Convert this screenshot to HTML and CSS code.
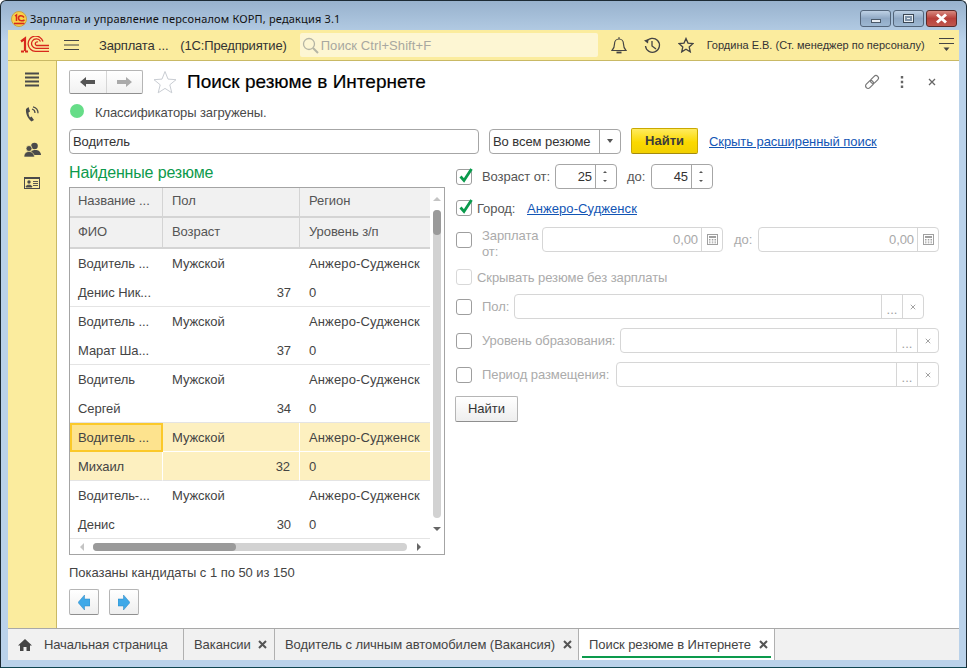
FILE: index.html
```html
<!DOCTYPE html>
<html lang="ru">
<head>
<meta charset="utf-8">
<title>Поиск резюме в Интернете</title>
<link rel="stylesheet" href="styles.css">
</head>
<body>
<svg class="defs" width="0" height="0" aria-hidden="true"><defs>
<symbol id="calc" viewBox="0 0 11 11"><rect x=".5" y=".5" width="10" height="10" fill="none" stroke="currentColor"/><rect x="2" y="2" width="7" height="2" fill="currentColor"/><path d="M2 5.500h1.500M4.800 5.500h1.500M7.500 5.500h1.500M2 7h1.500M4.800 7h1.500M7.500 7h1.500M2 8.800h1.500M4.800 8.800h1.500M7.500 8.800h1.500" stroke="currentColor" fill="none"/></symbol>
<symbol id="cross" viewBox="0 0 8 8"><path d="M1 1l6 6M7 1L1 7" stroke="currentColor" stroke-width="1.300" fill="none"/></symbol>
<symbol id="crossb" viewBox="0 0 9 9"><path d="M1 1l7 7M8 1L1 8" stroke="currentColor" stroke-width="2" fill="none"/></symbol>
<symbol id="tick" viewBox="0 0 16 16"><path d="M3.500 8.500l3.500 4 7.500-11.500" stroke="#0a9a4c" stroke-width="2.800" fill="none"/></symbol>
</defs></svg>
<div class="window">
  <header class="titlebar">
    <svg class="app-logo" width="16" height="16" viewBox="0 0 16 16"><circle cx="8" cy="8" r="7.500" fill="#f8d24a" stroke="#c9a040"/><path d="M3 12.500h10.500" stroke="#d8281c" stroke-width="1.600"/><path d="M4 5l1.500-1v6M13 6.500C11.500 4 7.500 4 7.500 7s4 3.300 6 2" stroke="#d8281c" stroke-width="1.500" fill="none"/></svg>
    <span class="app-title">Зарплата и управление персоналом КОРП, редакция 3.1</span>
    <div class="win-btns">
      <span class="win-btn"><i class="g-min"></i></span>
      <span class="win-btn"><i class="g-max"></i></span>
      <span class="win-btn win-close"><svg width="13" height="11" viewBox="0 0 13 11"><path d="M2 1.500l9 8M11 1.500l-9 8" stroke="#fff" stroke-width="3" fill="none"/></svg></span>
    </div>
  </header>

  <div class="toolbar">
    <svg class="logo-1c" width="30" height="18" viewBox="0 0 30 18"><path d="M1 5.500L5 2.500V15M4 15.500H1M5 15.500H8" fill="none" stroke="#d8281c" stroke-width="2.200"/><path d="M29 12.300H16A4.700 4.700 0 1 1 20.500 5.500M29 15.300H15.500A7.600 7.600 0 1 1 23 5.500M29 9.500H16.500A1.900 1.900 0 1 1 18 6" fill="none" stroke="#d8281c" stroke-width="1.300"/></svg>
    <svg class="burger" width="16" height="12" viewBox="0 0 16 12"><path d="M0 1.500h15M0 6h15M0 10.500h15" stroke="#444" stroke-width="1"/></svg>
    <span class="tb-app">Зарплата ...</span>
    <span class="tb-prod">(1С:Предприятие)</span>
    <div class="global-search">
      <svg width="17" height="17" viewBox="0 0 17 17"><circle cx="7" cy="7" r="5.500" fill="none" stroke="#b5b5a5" stroke-width="1.300"/><path d="M11 11l5 5" stroke="#b5b5a5" stroke-width="2"/></svg>
      <span>Поиск Ctrl+Shift+F</span>
    </div>
    <svg class="tb-ic bell" width="16" height="17" viewBox="0 0 16 17"><path d="M1 13.500c2-2 2.500-3.500 2.500-6.500C3.500 4 5.500 2 8 2s4.500 2 4.500 5c0 3 .5 4.500 2.500 6.500z" fill="none" stroke="#444" stroke-width="1.200"/><path d="M5.500 15.500h5" stroke="#444" stroke-width="1.800"/><path d="M8 0v2" stroke="#444"/></svg>
    <svg class="tb-ic hist" width="17" height="17" viewBox="0 0 17 17"><path d="M2.300 5A7 7 0 1 1 1.500 9" fill="none" stroke="#444" stroke-width="1.300"/><path d="M0 3.500l4 3 .5-4.500z" fill="#444"/><path d="M8 4v5l4 3" fill="none" stroke="#444" stroke-width="1.300"/></svg>
    <svg class="tb-ic star" width="16" height="16" viewBox="0 0 16 16"><path d="M8 1.500l2 4.600 5 .5-3.800 3.300 1.100 5L8 12.300 3.700 14.900l1.100-5L1 6.600l5-.5z" fill="none" stroke="#444" stroke-width="1.300"/></svg>
    <span class="tb-user">Гордина Е.В. (Ст. менеджер по персоналу)</span>
    <svg class="tb-menu" width="15" height="15" viewBox="0 0 15 15"><path d="M0 .5h15M0 5.500h15" stroke="#444"/><path d="M4.500 9.500h6L7.500 13z" fill="#444"/></svg>
  </div>

  <div class="main">
    <nav class="sidebar">
      <svg width="14" height="15" viewBox="0 0 14 15"><path d="M0 1.500h14M0 5.500h14M0 9.500h14M0 13.500h14" stroke="#4a4a4a" stroke-width="2"/></svg>
      <svg width="14" height="17" viewBox="0 0 14 17"><path d="M3.500 1L1 3c-.5 4 1.500 9.500 5.500 12.500l2.500-1.500-2.500-3.500-1.500 1C4 10 3.500 8 3.500 6.500L5 5.500z" fill="#4a4a4a"/><path d="M7 3a4 4 0 0 1 3 4M8 .8a6.500 6.500 0 0 1 5 6.500" stroke="#4a4a4a" fill="none" stroke-width="1.200"/></svg>
      <svg width="17" height="16" viewBox="0 0 17 16"><circle cx="10.500" cy="4" r="3.300" fill="#4a4a4a"/><path d="M7 9.500C8 8 13 7.500 15 9c1.500 1 2 3 2 4h-7z" fill="#4a4a4a"/><circle cx="5" cy="6.500" r="3" fill="#4a4a4a" stroke="#fbec9e" stroke-width=".8"/><path d="M0 15c0-4 2.500-5.500 5-5.500s5 1.500 5.500 5.500z" fill="#4a4a4a" stroke="#fbec9e" stroke-width=".6"/></svg>
      <svg width="16" height="12" viewBox="0 0 16 12"><rect x=".5" y=".5" width="15" height="11" fill="none" stroke="#4a4a4a"/><rect y="0" width="16" height="2" fill="#4a4a4a"/><circle cx="5" cy="5" r="1.700" fill="#4a4a4a"/><path d="M2 10c0-2.500 6-2.500 6 0zM9 4.500h5M9 6.500h5M9 8.500h5" fill="#4a4a4a" stroke="#4a4a4a" stroke-width=".9"/></svg>
    </nav>

    <main class="content">
      <div class="form-head">
        <div class="nav-group">
          <span class="nav-cell"><svg width="16" height="10" viewBox="0 0 16 10"><path d="M0 5l6-5v3h9v4H6v3z" fill="#555"/></svg></span>
          <span class="nav-cell"><svg width="16" height="10" viewBox="0 0 16 10"><path d="M16 5l-6-5v3H1v4h9v3z" fill="#aaa"/></svg></span>
        </div>
        <svg class="fav" width="24" height="24" viewBox="0 0 24 24"><path d="M12 1.500l3 7.600 8 .6-6.200 5.100 2 8L12 18.400 5.200 22.800l2-8L1 9.700l8-.6z" fill="#fff" stroke="#c9cdd3" stroke-width="1"/></svg>
        <h1>Поиск резюме в Интернете</h1>
        <div class="head-tools">
          <svg width="16" height="16" viewBox="0 0 16 16"><g fill="none" stroke="#777" stroke-width="1.200"><rect x="6" y="3" width="9" height="5" rx="2.500" transform="rotate(-45 10.500 5.500)"/><rect x="1" y="8" width="9" height="5" rx="2.500" transform="rotate(-45 5.500 10.500)"/></g></svg>
          <svg width="4" height="12" viewBox="0 0 4 12"><path d="M2 0v2.500M2 4.700v2.500M2 9.500V12" stroke="#666" stroke-width="2.400"/></svg>
          <svg width="8" height="8"><use href="#cross" color="#666"/></svg>
        </div>
      </div>

      <div class="status"><i class="dot"></i><span>Классификаторы загружены.</span></div>

      <div class="searchbar">
        <div class="field search-input"><span class="val">Водитель</span></div>
        <div class="field scope"><span class="val">Во всем резюме</span><span class="cell-btn w21"><i class="caret"></i></span></div>
        <button class="btn-primary" type="button">Найти</button>
        <a class="link adv" href="#">Скрыть расширенный поиск</a>
      </div>

      <div class="columns">
        <section class="left">
          <h2>Найденные резюме</h2>
          <div class="table">
            <div class="grid">
              <div class="hc">Название ...</div><div class="hc">Пол</div><div class="hc">Регион</div>
              <div class="hc hc2">ФИО</div><div class="hc hc2">Возраст</div><div class="hc hc2">Уровень з/п</div>

              <div class="c">Водитель ...</div><div class="c">Мужской</div><div class="c">Анжеро-Судженск</div>
              <div class="c end">Денис Ник...</div><div class="c end num">37</div><div class="c end">0</div>

              <div class="c">Водитель ...</div><div class="c">Мужской</div><div class="c">Анжеро-Судженск</div>
              <div class="c end">Марат Ша...</div><div class="c end num">37</div><div class="c end">0</div>

              <div class="c">Водитель</div><div class="c">Мужской</div><div class="c">Анжеро-Судженск</div>
              <div class="c end">Сергей</div><div class="c end num">34</div><div class="c end">0</div>

              <div class="c sel cur">Водитель ...</div><div class="c sel">Мужской</div><div class="c sel">Анжеро-Судженск</div>
              <div class="c sel end">Михаил</div><div class="c sel end num">32</div><div class="c sel end">0</div>

              <div class="c">Водитель-...</div><div class="c">Мужской</div><div class="c">Анжеро-Судженск</div>
              <div class="c end">Денис</div><div class="c end num">30</div><div class="c end">0</div>
            </div>
            <div class="vscroll"><i class="arr-up"></i><div class="vtrack"><i class="vthumb"></i></div><i class="arr-down"></i></div>
            <div class="hscroll"><i class="arr-left"></i><div class="htrack"><i class="hthumb"></i></div><i class="arr-right"></i></div>
          </div>
          <p class="shown">Показаны кандидаты с 1 по 50 из 150</p>
          <div class="pager">
            <span class="btn-sq"><svg width="12" height="15" viewBox="0 0 12 15"><path d="M0 7.500L6.500 0v4H12v7H6.500v4z" fill="#3fa9e8" stroke="#2a85c0" stroke-width=".5"/></svg></span>
            <span class="btn-sq"><svg width="12" height="15" viewBox="0 0 12 15"><path d="M12 7.500L5.500 0v4H0v7h5.500v4z" fill="#3fa9e8" stroke="#2a85c0" stroke-width=".5"/></svg></span>
          </div>
        </section>

        <section class="right">
          <div class="row r-age">
            <span class="chk"><svg width="16" height="16"><use href="#tick"/></svg></span>
            <label class="lab l1">Возраст от:</label>
            <div class="field spin"><span class="val ar">25</span><span class="spinner"><i class="up"></i><i class="down"></i></span></div>
            <label class="lab l-to">до:</label>
            <div class="field spin"><span class="val ar">45</span><span class="spinner"><i class="up"></i><i class="down"></i></span></div>
          </div>
          <div class="row r-city">
            <span class="chk"><svg width="16" height="16"><use href="#tick"/></svg></span>
            <label class="lab l2 l-city">Город:</label>
            <a class="link" href="#">Анжеро-Судженск</a>
          </div>
          <div class="row r-sal dis">
            <span class="chk"></span>
            <label class="lab l-sal">Зарплата от:</label>
            <div class="field grow"><span class="val ar">0,00</span><span class="cell-btn w21"><svg width="11" height="11"><use href="#calc"/></svg></span></div>
            <label class="lab l-to2">до:</label>
            <div class="field grow"><span class="val ar">0,00</span><span class="cell-btn w21"><svg width="11" height="11"><use href="#calc"/></svg></span></div>
          </div>
          <div class="row r-hide dis">
            <span class="chk faint"></span>
            <label class="lab l2">Скрывать резюме без зарплаты</label>
          </div>
          <div class="row r-sex dis">
            <span class="chk"></span>
            <label class="lab l3">Пол:</label>
            <div class="field grow"><span class="val"></span><span class="cell-btn w21 dots">...</span><span class="cell-btn w21"><svg width="6" height="6" viewBox="0 0 8 8"><use href="#cross"/></svg></span></div>
          </div>
          <div class="row r-opt dis">
            <span class="chk"></span>
            <label class="lab l3 l-edu">Уровень образования:</label>
            <div class="field grow"><span class="val"></span><span class="cell-btn w21 dots">...</span><span class="cell-btn w21"><svg width="6" height="6" viewBox="0 0 8 8"><use href="#cross"/></svg></span></div>
          </div>
          <div class="row r-opt dis">
            <span class="chk"></span>
            <label class="lab l3 l-per">Период размещения:</label>
            <div class="field grow"><span class="val"></span><span class="cell-btn w21 dots">...</span><span class="cell-btn w21"><svg width="6" height="6" viewBox="0 0 8 8"><use href="#cross"/></svg></span></div>
          </div>
          <button class="btn" type="button">Найти</button>
        </section>
      </div>
    </main>
  </div>

  <footer class="tabs">
    <div class="tab t-home"><svg width="14" height="12" viewBox="0 0 14 12"><path d="M7 0L0 6.500h2V12h3.500V8h3v4H12V6.500h2z" fill="#444"/></svg><span>Начальная страница</span></div>
    <div class="tab t-vac"><span>Вакансии</span><svg width="9" height="9"><use href="#crossb" color="#555"/></svg></div>
    <div class="tab t-drv"><span>Водитель с личным автомобилем (Вакансия)</span><svg width="9" height="9"><use href="#crossb" color="#555"/></svg></div>
    <div class="tab active"><span>Поиск резюме в Интернете</span><svg width="9" height="9"><use href="#crossb" color="#555"/></svg></div>
  </footer>
</div>
</body>
</html>
```

FILE: styles.css
```css
* { box-sizing: border-box; }
html, body { margin: 0; padding: 0; }
body { width: 967px; height: 668px; overflow: hidden; background: #fff; font: 13px/15px "Liberation Sans", Arial, sans-serif; letter-spacing: -.07px; color: #4a4a4a; }
.defs { position: absolute; }
i { display: block; }
svg { display: block; flex: none; }

.window { width: 967px; height: 668px; display: flex; flex-direction: column; padding: 0 7px 7px 7px; background: linear-gradient(#98b2cd 0, #bad2ea 40px, #bad2ea 100%); border: 1px solid #1c2a33; border-bottom-color: #0f4550; border-radius: 6px 6px 0 0; }

.titlebar { height: 29px; margin: 0 -1px; padding-top: 7px; display: flex; align-items: center; flex: none; }
.app-logo { margin-left: 4px; }
.app-title { margin-left: 3px; font: 11px/14px "Noto Sans", sans-serif; letter-spacing: .17px; color: #111; }
.win-btns { margin-left: auto; margin-right: 3px; align-self: flex-start; margin-top: 2px; display: flex; gap: 2px; }
.win-btn { width: 31px; height: 17px; border: 1px solid #53657a; border-radius: 3px; background: linear-gradient(#bed1e5, #90a9c5 50%, #9db8d2); display: flex; align-items: center; justify-content: center; }
.win-close { border-color: #5a2a28; background: linear-gradient(#d88a80, #b8403a 50%, #c0574d); }
.g-min { width: 10px; height: 4px; margin-top: 4px; background: #e8eef4; border: 1px solid #4a5a6a; }
.g-max { width: 11px; height: 9px; border: 1px solid #3a4654; background: #e8eef4; box-shadow: inset 0 0 0 1px #e8eef4, inset 0 0 0 3px #7e92a8; }

.toolbar { height: 31px; flex: none; display: flex; align-items: center; background: #fbec9e; border-bottom: 1px solid #c9b965; color: #333; }
.logo-1c { margin-left: 12px; }
.burger { margin-left: 14px; }
.tb-app { margin-left: 19px; letter-spacing: -.17px; }
.tb-prod { margin-left: 12px; letter-spacing: -.17px; }
.global-search { width: 298px; height: 24px; margin-left: 13px; background: #fdf6d3; border-radius: 2px; display: flex; align-items: center; gap: 2px; padding-left: 2px; color: #a8a8a0; letter-spacing: .09px; }
.bell { margin-left: 13px; }
.hist { margin-left: 17px; }
.star { margin-left: 17px; }
.tb-user { margin-left: 13px; font-size: 11px; letter-spacing: 0; }
.tb-menu { margin-left: 14px; }

.main { flex: 1; min-height: 0; display: flex; }
.sidebar { width: 49px; flex: none; background: #fbec9e; border-right: 1px solid #c9b965; display: flex; flex-direction: column; align-items: center; padding-top: 11px; gap: 19px; }
.content { flex: 1; min-width: 0; background: #fff; padding: 8px 19px 0 12px; }

.form-head { height: 25px; display: flex; align-items: center; }
.nav-group { width: 74px; height: 24px; display: flex; border: 1px solid #b5b5b5; border-bottom-color: #8f8f8f; border-radius: 2px; background: linear-gradient(#fff, #f1f1f1); }
.nav-cell { flex: 1; display: flex; align-items: center; justify-content: center; }
.nav-cell + .nav-cell { border-left: 1px solid #d6d6d6; }
.fav { margin-left: 10px; }
h1 { margin: 0 0 0 10px; font: 19px/24px "Liberation Sans", Arial, sans-serif; letter-spacing: 0; color: #000; -webkit-text-stroke: .2px #000; }
.head-tools { margin-left: auto; display: flex; align-items: center; margin-right: 4px; }
.head-tools svg:nth-child(2) { margin-left: 20px; }
.head-tools svg:nth-child(3) { margin-left: 24px; }

.status { display: flex; align-items: center; height: 14px; margin-top: 10px; padding-left: 1px; }
.dot { width: 14px; height: 14px; border-radius: 50%; background: #66dd88; }
.status span { margin: 2px 0 0 11px; letter-spacing: -.12px; }

.searchbar { display: flex; align-items: center; height: 26px; margin-top: 10px; }
.field { height: 25px; border: 1px solid #a6a6a6; border-radius: 4px; background: #fff; display: flex; align-items: stretch; }
.val { flex: 1; min-width: 0; padding: 0 3px; line-height: 23px; color: #333; white-space: nowrap; }
.ar { text-align: right; }
.search-input { width: 410px; }
.scope { width: 132px; margin-left: 10px; }
.cell-btn { flex: none; display: flex; align-items: center; justify-content: center; border-left: 1px solid #a6a6a6; }
.w21 { width: 21px; }
.caret { width: 0; height: 0; border: 3.500px solid transparent; border-top: 4px solid #555; border-bottom: 0; }
.btn-primary { width: 67px; height: 26px; margin-left: 10px; border: 1px solid #c9a800; border-bottom-color: #a38a10; border-radius: 2px; background: linear-gradient(#ffeb5f, #fbd900 55%, #f2d000); font: bold 13px/14px "Liberation Sans", Arial, sans-serif; color: #3c3c3c; letter-spacing: 0; padding: 0; }
.link { color: #1255b5; text-decoration: underline; white-space: nowrap; }
.adv { margin-left: 11px; }

.columns { display: flex; }
.left { width: 376px; flex: none; }
h2 { margin: 10px 0 0; font: 16px/18px "Liberation Sans", Arial, sans-serif; color: #0c9a4c; letter-spacing: -.15px; }
.table { width: 376px; height: 368px; margin-top: 5px; border: 1px solid #a4a4a4; display: grid; grid-template-columns: 360px 14px; grid-template-rows: 351px 15px; overflow: hidden; }
.grid { display: grid; grid-template-columns: 93px 137px 130px; grid-template-rows: 30px 31px; grid-auto-rows: 29px; align-content: start; }
.hc { background: #f1f1f1; color: #555; padding: 0 8px; line-height: 26px; border-right: 1px solid #d4d4d4; border-bottom: 2px solid #d4d4d4; }
.hc:nth-child(3n) { border-right: 0; }
.hc:nth-child(3n+2), .hc:nth-child(3n) { padding-left: 9px; }
.hc2 { line-height: 28px; }
.c { height: 29px; padding: 0 8px; line-height: 29px; color: #444; white-space: nowrap; overflow: hidden; }
.c:nth-child(3n+2), .c:nth-child(3n) { padding-left: 9px; }
.c:nth-child(3n) { letter-spacing: .13px; }
.c.end { border-bottom: 1px solid #e4e4e4; }
.c.num { text-align: right; padding-right: 9px; }
.sel { background: #fdf0c0; border-right: 1px solid #fff; border-bottom: 1px solid #fff; }
.sel:nth-child(3n) { border-right: 0; }
.cur { background: #fde38e; border: 2px solid #fbc92a; padding: 0 6px; line-height: 25px; }
.vscroll { grid-row: 1; grid-column: 2; display: flex; flex-direction: column; align-items: center; }
.vtrack { flex: 1; width: 8px; border-radius: 4px; background: #d2d2d2; margin-top: 5px; min-height: 0; }
.vthumb { height: 25px; width: 8px; border-radius: 4px; background: #9a9a9a; }
.arr-up { width: 0; height: 0; margin: 9px 0 4px; border: 4px solid transparent; border-top: 0; border-bottom: 4px solid #c4c4c4; }
.arr-down { width: 0; height: 0; margin: 9px 0 8px; border: 4px solid transparent; border-bottom: 0; border-top: 4px solid #666; }
.hscroll { grid-row: 2; grid-column: 1; display: flex; align-items: center; padding-right: 9px; }
.htrack { flex: 1; height: 8px; border-radius: 4px; background: #d2d2d2; margin-left: 9px; }
.hthumb { width: 143px; height: 8px; border-radius: 4px; background: #9a9a9a; }
.arr-left { width: 0; height: 0; margin-left: 10px; border: 4px solid transparent; border-left: 0; border-right: 4px solid #c4c4c4; }
.arr-right { width: 0; height: 0; margin-left: 10px; border: 4px solid transparent; border-right: 0; border-left: 4px solid #666; }
.shown { margin: 10px 0 0; letter-spacing: -.04px; color: #444; }
.pager { display: flex; gap: 10px; margin-top: 9px; }
.btn-sq { width: 30px; height: 26px; border: 1px solid #b5b5b5; border-bottom-color: #8f8f8f; border-radius: 2px; background: linear-gradient(#fff, #eee); display: flex; align-items: center; justify-content: center; }

.right { width: 485px; margin-left: 10px; margin-top: 10px; }
.row { display: flex; align-items: center; height: 25px; }
.chk { width: 16px; height: 16px; margin-left: 1px; flex: none; border: 1px solid #9e9e9e; border-radius: 3px; background: #fff; }
.chk svg { margin: -2px 0 0 0; }
.chk.faint { border-color: #d8d8d8; }
.lab { white-space: nowrap; color: #555; }
.l1 { margin-left: 10px; width: 67px; }
.l2 { margin-left: 5px; }
.l3 { margin-left: 10px; }
.spin { width: 62px; margin-left: 6px; }
.spinner { width: 21px; flex: none; border-left: 1px solid #a6a6a6; position: relative; }
.spinner .up, .spinner .down { position: absolute; left: 7px; width: 0; height: 0; border: 2.500px solid transparent; }
.spinner .up { top: 6px; border-top: 0; border-bottom: 2.500px solid #555; }
.spinner .down { bottom: 6px; border-bottom: 0; border-top: 2.500px solid #555; }
.l-to { margin-left: 10px; width: 24px; }
.l-to + .spin { margin-left: 0; }
.r-city { margin-top: 6px; height: 26px; }
.l-city { width: 37px; }
.r-city .link { margin-left: 13px; letter-spacing: .07px; }
.r-sal { margin-top: 6px; padding-right: 1px; }
.l-sal { margin: 1px 0 0 10px; width: 55px; height: 32px; white-space: normal; line-height: 16px; align-self: flex-start; }
.l-sal + .field { margin-left: 5px; }
.l-to2 { margin-left: 11px; width: 24px; }
.grow { flex: 1; min-width: 0; }
.r-hide { margin-top: 13px; height: 24px; }
.r-sex { margin-top: 5px; padding-right: 16px; }
.r-sex .lab { width: 22px; }
.r-sex .field { margin-left: 10px; }
.r-opt { margin-top: 9px; padding-right: 1px; }
.r-opt .field { margin-left: 6px; }
.l-edu { width: 132px; }
.l-per { width: 128px; }
.dis .lab { color: #ababab; }
.dis .val { color: #a8a8a8; }
.dis .field { border-color: #d6d6d6; }
.dis .cell-btn { border-left-color: #d6d6d6; color: #a0a0a0; }
.dots { align-items: flex-end; padding-bottom: 3px; line-height: 10px; letter-spacing: 0; }
.btn { display: block; width: 63px; height: 26px; margin-top: 9px; border: 1px solid #b5b5b5; border-bottom-color: #8f8f8f; border-radius: 2px; background: linear-gradient(#fff, #eee); font: 13px/14px "Liberation Sans", Arial, sans-serif; color: #333; padding: 0; }

.tabs { height: 32px; flex: none; display: flex; background: #f1f1f1; border-top: 1px solid #a8a8a8; color: #444; }
.tab { display: flex; align-items: center; gap: 8px; padding: 0 10px; border-right: 1px solid #b0b0b0; white-space: nowrap; }
.t-home { gap: 12px; width: 176px; letter-spacing: -.12px; }
.t-vac { width: 91px; gap: 7px; }
.t-drv { width: 304px; }
.tab.active { background: #fff; width: 196px; position: relative; }
.tab.active::after { content: ""; position: absolute; left: 3px; right: 3px; bottom: 2px; height: 2px; background: #0c9a4c; }
```
